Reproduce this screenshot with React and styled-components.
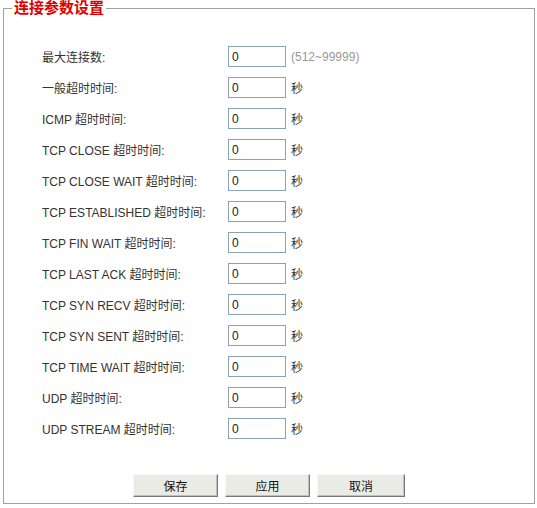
import React from 'react';
import styled, { createGlobalStyle } from 'styled-components';

const GlobalStyle = createGlobalStyle`
  body {
    margin: 0;
    background: #ffffff;
    font-family: "Liberation Sans", Arial, "Noto Sans CJK SC", sans-serif;
    font-size: 12px;
    color: #333333;
  }
`

const Fieldset = styled.fieldset`
  box-sizing: border-box;
  width: 532px;
  height: 504px;
  margin: 0 0 0 3px;
  padding: 0;
  border: 1px solid #a0a0a0;
  min-width: 0;
`

const Legend = styled.legend`
  margin-left: 8px;
  padding: 0 2px;
  font-size: 15px;
  line-height: 16px;
  font-weight: bold;
  color: #e10000;
  font-family: "Liberation Sans", "Noto Sans CJK SC", sans-serif;
`

const Form = styled.div`
  display: grid;
  grid-template-columns: 186px 58px auto;
  grid-auto-rows: 31px;
  align-items: center;
  padding: 25px 0 0 38px;
`

const Label = styled.div`
  color: #333333;
  white-space: nowrap;
`

const Input = styled.input`
  box-sizing: border-box;
  width: 58px;
  height: 21px;
  margin: 0;
  padding: 0 3px;
  border: 1px solid #8aa2b8;
  font-family: "Liberation Sans", Arial, sans-serif;
  font-size: 12px;
  color: #222222;
  outline: none;
`

const Unit = styled.span`
  margin-left: 5px;
  color: ${p => (p.$hint ? '#999999' : '#333333')};
`

const ButtonBar = styled.div`
  display: flex;
  justify-content: center;
  gap: 7px;
  margin-top: 30px;
`

const Button = styled.button`
  box-sizing: border-box;
  width: ${p => p.$w}px;
  height: 23px;
  margin: 0;
  padding: 0;
  background: #ebebe6;
  border: 1px solid;
  border-color: #f8f8f8 #777777 #777777 #f8f8f8;
  box-shadow: inset -1px -1px 0 #c0c0bc;
  font-family: "Liberation Sans", "Noto Sans CJK SC", sans-serif;
  font-size: 12px;
  color: #111111;
`

const rows = [
  ['最大连接数:', '(512~99999)'],
  ['一般超时时间:', '秒'],
  ['ICMP 超时时间:', '秒'],
  ['TCP CLOSE 超时时间:', '秒'],
  ['TCP CLOSE WAIT 超时时间:', '秒'],
  ['TCP ESTABLISHED 超时时间:', '秒'],
  ['TCP FIN WAIT 超时时间:', '秒'],
  ['TCP LAST ACK 超时时间:', '秒'],
  ['TCP SYN RECV 超时时间:', '秒'],
  ['TCP SYN SENT 超时时间:', '秒'],
  ['TCP TIME WAIT 超时时间:', '秒'],
  ['UDP 超时时间:', '秒'],
  ['UDP STREAM 超时时间:', '秒'],
]

export default function App() {
  return (
    <>
      <GlobalStyle />
      <Fieldset>
        <Legend>连接参数设置</Legend>
        <Form>
          {rows.map(([label, unit], i) => (
            <React.Fragment key={i}>
              <Label>{label}</Label>
              <Input defaultValue="0" />
              <Unit $hint={i === 0}>{unit}</Unit>
            </React.Fragment>
          ))}
        </Form>
        <ButtonBar>
          <Button $w={85}>保存</Button>
          <Button $w={85}>应用</Button>
          <Button $w={88}>取消</Button>
        </ButtonBar>
      </Fieldset>
    </>
  )
}
